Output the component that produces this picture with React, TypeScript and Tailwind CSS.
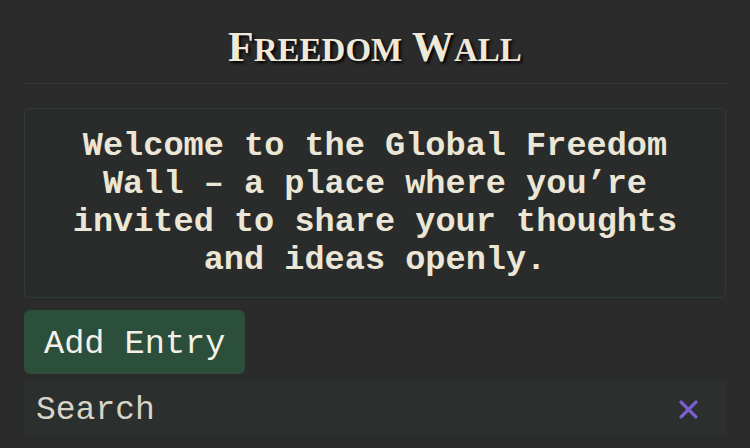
export default function App() {
    return (
        <div className="min-h-[448px] bg-[#2b2b2b] px-6 pt-[22px] font-['Liberation_Mono',monospace] text-[#ece6d6]">
            <h1 className="pb-2 text-center font-['Liberation_Serif',serif] text-[42px] font-semibold leading-[50px] text-[#efe9da] [text-shadow:2px_2px_3px_#000]">
                F<span className="text-[33px]">REEDOM</span> W<span className="text-[33px]">ALL</span>
            </h1>
            <hr className="border-0 border-t border-[#2f3d36]" />
            <div className="mt-6 rounded border border-[#2c3d33] bg-[#292c2b] px-4 py-[18px] text-center text-[33.6px] font-bold leading-[38px]">
                Welcome to the Global Freedom Wall – a place where you’re invited to share your thoughts and ideas openly.
            </div>
            <button className="mt-3 block h-16 rounded-md bg-[#2b4f3a] px-5 pt-1.5 text-[33.6px] leading-none text-[#f4f1ea]">
                Add Entry
            </button>
            <div className="mt-1.5 flex h-[57px] items-center bg-[#2b302e] pl-3 pr-7">
                <input
                    placeholder="Search"
                    className="min-w-0 flex-1 bg-transparent pt-1 text-[33px] outline-none placeholder:text-[#d8d4c8]"
                />
                <svg width="19" height="19" viewBox="0 0 18 18" className="mt-0.5 shrink-0">
                    <path d="M2 2L16 16M16 2L2 16" stroke="#7b5fd0" strokeWidth="3.2" strokeLinecap="round" />
                </svg>
            </div>
        </div>
    )
}
